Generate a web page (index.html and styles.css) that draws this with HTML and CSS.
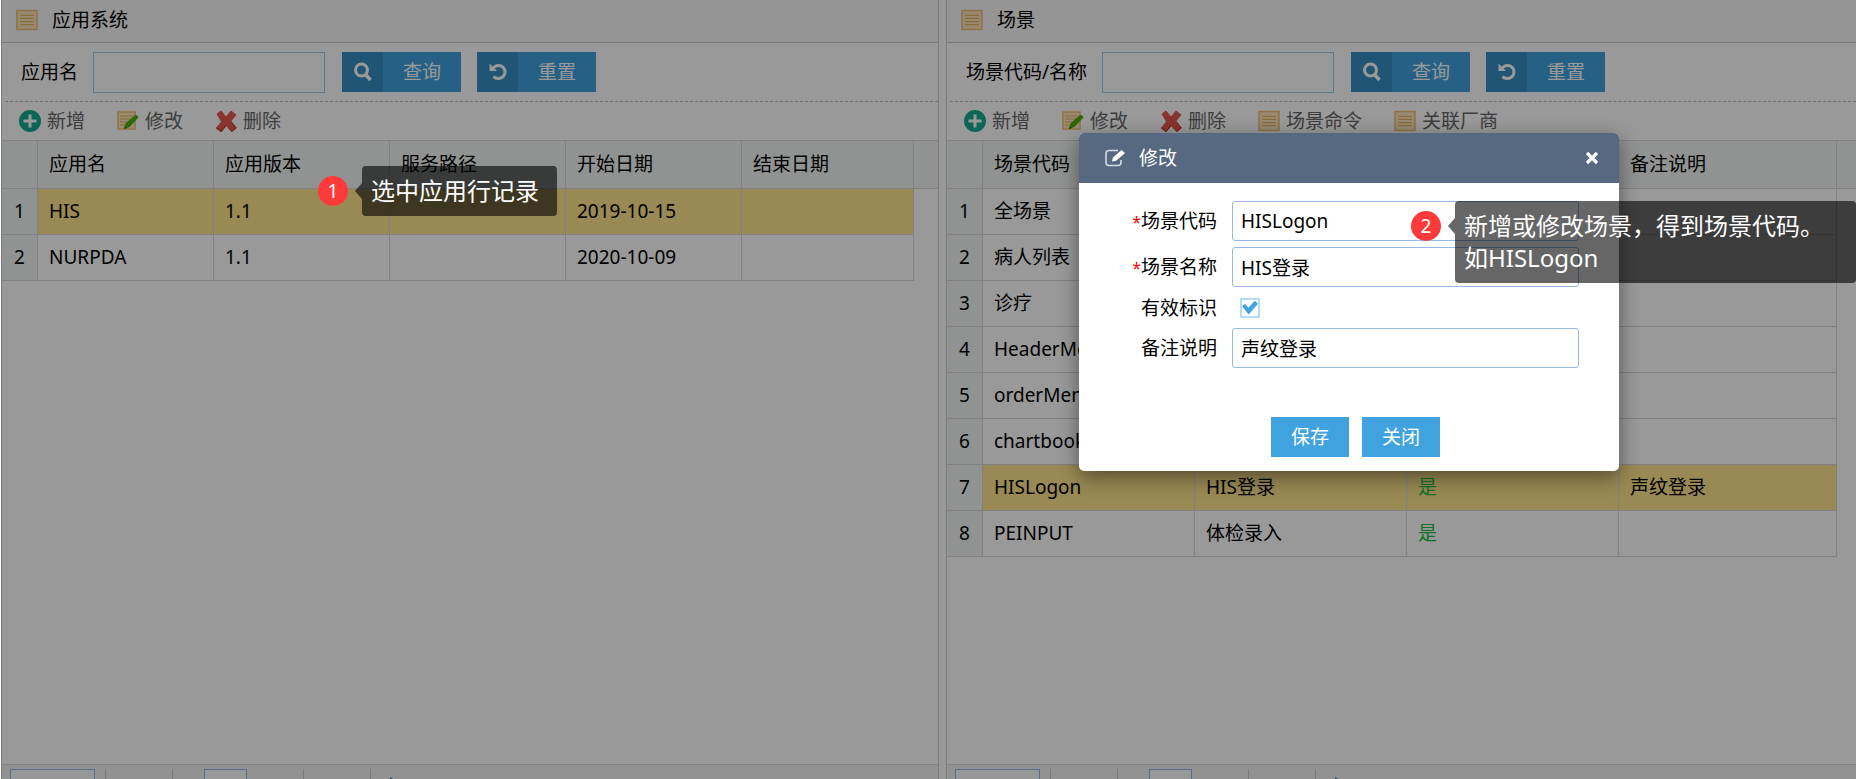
FILE: index.html
```html
<!DOCTYPE html>
<html lang="zh-CN">
<head>
    <meta charset="UTF-8">
    <meta name="viewport" content="width=device-width, initial-scale=1.0">
    <title>应用场景维护</title>
    <link rel="stylesheet" href="styles.css">
</head>
<body>

    <!-- 图标 -->
    <svg class="icon-defs" aria-hidden="true">
        <symbol id="i-list" viewBox="0 0 21 20">
            <rect x="1" y="1" width="19" height="18" fill="#fbe6c0" stroke="#eebf72" stroke-width="1.500"/>
            <path d="M4 5.500h13M4 8.500h13M4 11.500h13M4 14.500h13" stroke="#e8b45c" stroke-width="1.200"/>
        </symbol>
        <symbol id="i-add" viewBox="0 0 22 22">
            <circle cx="11" cy="11" r="11" fill="#17ab8c"/>
            <path d="M11 4.500v13M4.500 11h13" stroke="#fff" stroke-width="3"/>
        </symbol>
        <symbol id="i-edit" viewBox="0 0 22 20">
            <rect x="1" y="1" width="17" height="17" fill="#fbe6c0" stroke="#eebf72" stroke-width="1.500"/>
            <path d="M3 5h13M3 8h11M3 11h8M3 14h6" stroke="#e8b45c" stroke-width="1.200"/>
            <path d="M7 18l1.500-5.500L18 4q3-.5 3.500 2.500L12.500 16z" fill="#52ac0c"/>
            <path d="M7 18l.8-3 2.200 2z" fill="#3a7d08"/>
        </symbol>
        <symbol id="i-del" viewBox="0 0 22 22">
            <path d="M2 4L6 1l5 6 5-6 5 4-5.500 6.500L21 18l-4.500 3.500L11 15.500 6 21.500 1.500 18l5-6.500z" fill="#e4574f" stroke="#e4574f" stroke-linejoin="round"/>
            <path d="M11 15.500L6 21.500 1.500 18M16 11.500L21 18l-4.500 3.500" fill="none" stroke="#bd3730" stroke-width="1.200"/>
        </symbol>
        <symbol id="i-search" viewBox="0 0 20 20">
            <circle cx="8.500" cy="8" r="6" fill="none" stroke="#fff" stroke-width="3"/>
            <path d="M12.500 12.500l5 5.500" stroke="#fff" stroke-width="3.500"/>
        </symbol>
        <symbol id="i-reset" viewBox="0 0 20 20">
            <path d="M5 6.500Q7 3.500 10.500 3.500a6.500 6.500 0 0 1 0 13q-3.500 0-5-2" fill="none" stroke="#fff" stroke-width="3"/>
            <path d="M1.500 1.500v7.500h7.500z" fill="#fff"/>
        </symbol>
        <symbol id="i-write" viewBox="0 0 21 18">
            <path d="M13 1.500H4Q1 1.500 1 4.500v9Q1 16.500 4 16.500h9q3 0 3-3V11" fill="none" stroke="#d5dce4" stroke-width="1.600"/>
            <path d="M7 12.500l.8-3.800L16.500 1l3.500 3-8.800 7.800z" fill="#fff"/>
        </symbol>
        <symbol id="i-close" viewBox="0 0 14 14">
            <path d="M2 2l10 10M12 2L2 12" stroke="#fff" stroke-width="3.200"/>
        </symbol>
        <symbol id="i-first" viewBox="0 0 16 16">
            <path d="M2 0v16M14 0L5 8l9 8" fill="none" stroke="#40a2de" stroke-width="3"/>
        </symbol>
        <symbol id="i-prev" viewBox="0 0 16 16">
            <path d="M12 0L4 8l8 8" fill="none" stroke="#40a2de" stroke-width="3"/>
        </symbol>
        <symbol id="i-next" viewBox="0 0 16 16">
            <path d="M4 0l8 8-8 8" fill="none" stroke="#40a2de" stroke-width="3"/>
        </symbol>
        <symbol id="i-last" viewBox="0 0 16 16">
            <path d="M14 0v16M2 0l9 8-9 8" fill="none" stroke="#40a2de" stroke-width="3"/>
        </symbol>
        <symbol id="i-refresh" viewBox="0 0 18 18">
            <path d="M9 4a6 6 0 1 0 6 6" fill="none" stroke="#2a82bd" stroke-width="3"/>
            <path d="M8 0l6 4-6 4z" fill="#2a82bd"/>
        </symbol>
    </svg>

    <main class="layout">
        <!-- 应用系统 -->
        <section class="panel">
            <h2 class="panel-title"><svg class="icon"><use href="#i-list"/></svg>应用系统</h2>
            <div class="search">
                <label for="appName">应用名</label>
                <input type="text" id="appName">
                <button class="btn-icon"><span><svg class="icon-sm"><use href="#i-search"/></svg></span><b>查询</b></button>
                <button class="btn-icon"><span><svg class="icon-sm"><use href="#i-reset"/></svg></span><b>重置</b></button>
            </div>
            <div class="toolbar">
                <button><svg class="icon"><use href="#i-add"/></svg>新增</button>
                <button><svg class="icon"><use href="#i-edit"/></svg>修改</button>
                <button><svg class="icon"><use href="#i-del"/></svg>删除</button>
            </div>
            <table class="grid">
                <colgroup>
                    <col class="col-no"><col class="col-app"><col class="col-app"><col class="col-app"><col class="col-app"><col class="col-end"><col>
                </colgroup>
                <thead>
                    <tr><th></th><th>应用名</th><th>应用版本</th><th>服务路径</th><th>开始日期</th><th>结束日期</th><th class="rest"></th></tr>
                </thead>
                <tbody>
                    <tr class="selected"><td>1</td><td>HIS</td><td>1.1</td><td></td><td>2019-10-15</td><td></td></tr>
                    <tr><td>2</td><td>NURPDA</td><td>1.1</td><td></td><td>2020-10-09</td><td></td></tr>
                </tbody>
            </table>
            <div class="pager">
                <select aria-label="每页条数"><option>10</option></select>
                <div class="pager-group">
                    <button aria-label="首页"><svg><use href="#i-first"/></svg></button>
                    <button aria-label="上一页"><svg><use href="#i-prev"/></svg></button>
                </div>
                <div class="pager-page"><input type="text" aria-label="页码" value="1"></div>
                <div class="pager-group">
                    <button aria-label="下一页"><svg><use href="#i-next"/></svg></button>
                    <button aria-label="末页"><svg><use href="#i-last"/></svg></button>
                </div>
                <button aria-label="刷新" class="refresh"><svg><use href="#i-refresh"/></svg></button>
                <span class="pager-info">共2条记录</span>
            </div>
        </section>

        <!-- 场景 -->
        <section class="panel">
            <h2 class="panel-title"><svg class="icon"><use href="#i-list"/></svg>场景</h2>
            <div class="search">
                <label for="sceneKey">场景代码/名称</label>
                <input type="text" id="sceneKey">
                <button class="btn-icon"><span><svg class="icon-sm"><use href="#i-search"/></svg></span><b>查询</b></button>
                <button class="btn-icon"><span><svg class="icon-sm"><use href="#i-reset"/></svg></span><b>重置</b></button>
            </div>
            <div class="toolbar">
                <button><svg class="icon"><use href="#i-add"/></svg>新增</button>
                <button><svg class="icon"><use href="#i-edit"/></svg>修改</button>
                <button><svg class="icon"><use href="#i-del"/></svg>删除</button>
                <button><svg class="icon"><use href="#i-list"/></svg>场景命令</button>
                <button><svg class="icon"><use href="#i-list"/></svg>关联厂商</button>
            </div>
            <table class="grid">
                <colgroup>
                    <col class="col-no"><col class="col-scene"><col class="col-scene"><col class="col-scene"><col class="col-note"><col>
                </colgroup>
                <thead>
                    <tr><th></th><th>场景代码</th><th>场景名称</th><th>有效标识</th><th>备注说明</th><th class="rest"></th></tr>
                </thead>
                <tbody>
                    <tr><td>1</td><td>全场景</td><td></td><td></td><td></td></tr>
                    <tr><td>2</td><td>病人列表</td><td></td><td></td><td></td></tr>
                    <tr><td>3</td><td>诊疗</td><td></td><td></td><td></td></tr>
                    <tr><td>4</td><td>HeaderMenu</td><td></td><td></td><td></td></tr>
                    <tr><td>5</td><td>orderMenu</td><td></td><td></td><td></td></tr>
                    <tr><td>6</td><td>chartbook</td><td></td><td></td><td></td></tr>
                    <tr class="selected"><td>7</td><td>HISLogon</td><td>HIS登录</td><td class="yes">是</td><td>声纹登录</td></tr>
                    <tr><td>8</td><td>PEINPUT</td><td>体检录入</td><td class="yes">是</td><td></td></tr>
                </tbody>
            </table>
            <div class="pager">
                <select aria-label="每页条数"><option>10</option></select>
                <div class="pager-group">
                    <button aria-label="首页"><svg><use href="#i-first"/></svg></button>
                    <button aria-label="上一页"><svg><use href="#i-prev"/></svg></button>
                </div>
                <div class="pager-page"><input type="text" aria-label="页码" value="1"></div>
                <div class="pager-group">
                    <button aria-label="下一页"><svg><use href="#i-next"/></svg></button>
                    <button aria-label="末页"><svg><use href="#i-last"/></svg></button>
                </div>
                <button aria-label="刷新" class="refresh"><svg><use href="#i-refresh"/></svg></button>
                <span class="pager-info">共8条记录</span>
            </div>
        </section>
    </main>

    <div class="mask"></div>

    <!-- 修改弹窗 -->
    <form class="dialog">
        <header class="dialog-title">
            <svg><use href="#i-write"/></svg>
            <h3>修改</h3>
            <button type="button" aria-label="关闭窗口"><svg><use href="#i-close"/></svg></button>
        </header>
        <div class="fields">
            <label for="code"><i>*</i>场景代码</label>
            <input type="text" id="code" value="HISLogon">
            <label for="name"><i>*</i>场景名称</label>
            <input type="text" id="name" value="HIS登录">
            <label for="active">有效标识</label>
            <input type="checkbox" id="active" checked>
            <label for="note">备注说明</label>
            <input type="text" id="note" value="声纹登录">
        </div>
        <div class="actions">
            <button type="button">保存</button>
            <button type="button">关闭</button>
        </div>
    </form>

    <!-- 操作说明 -->
    <div class="step step-1">
        <span class="step-no">1</span>
        <p>选中应用行记录</p>
    </div>
    <div class="step step-2">
        <span class="step-no">2</span>
        <p>新增或修改场景，得到场景代码。<br>如HISLogon</p>
    </div>

</body>
</html>
```
FILE: styles.css
```css
* {
    box-sizing: border-box;
}
body {
    margin: 0;
    height: 100vh;
    overflow: hidden;
    position: relative;
    background: #fff;
    color: #000;
    font-family: "Noto Sans", "Noto Sans CJK SC", sans-serif;
    font-size: 19px;
    line-height: 26px;
}
button, input, select {
    font: inherit;
    color: inherit;
}
button {
    padding: 0;
    border: none;
    background: none;
    cursor: pointer;
}
.icon-defs {
    display: none;
}
.icon {
    width: 22px;
    height: 22px;
}
.icon-sm {
    width: 20px;
    height: 20px;
}

/* 面板 */
.layout {
    display: grid;
    grid-template-columns: 938fr 910fr;
    gap: 7px;
    height: calc(100vh + 30px);
    padding-left: 1px;
}
.panel {
    display: flex;
    flex-direction: column;
    min-width: 0;
    border-left: 1px solid #ccc;
    border-right: 1px solid #ccc;
}
.panel:last-child {
    border-right: none;
}
.panel-title {
    display: flex;
    align-items: center;
    gap: 14px;
    height: 43px;
    margin: 0;
    padding: 0 0 2px 14px;
    background: #f9f9f9;
    border-bottom: 1px solid #ccc;
    font-size: 19px;
    font-weight: normal;
}
.search {
    display: flex;
    align-items: center;
    height: 59px;
    margin-left: 3px;
    padding-left: 16px;
    border-bottom: 1px dashed #bbb;
}
.search input {
    width: 232px;
    height: 41px;
    margin: 0 1px 0 15px;
    padding: 0 8px;
    background: #fff;
    border: 1px solid #9bd0ee;
}
.btn-icon {
    display: flex;
    width: 119px;
    height: 40px;
    margin-left: 16px;
    background: #40a2de;
    color: #fff;
}
.btn-icon span {
    display: flex;
    align-items: center;
    justify-content: center;
    width: 41px;
    height: 40px;
    background: #378ec4;
}
.btn-icon b {
    flex: 1;
    font-weight: normal;
    line-height: 40px;
}
.toolbar {
    display: flex;
    align-items: center;
    gap: 32px;
    height: 38px;
    padding-left: 17px;
    color: #666;
}
.toolbar button {
    display: flex;
    align-items: center;
    gap: 6px;
}

/* 表格 */
.grid {
    width: 100%;
    table-layout: fixed;
    border-spacing: 0;
    border-top: 1px solid #d8d8d8;
}
.col-no {
    width: 36px;
}
.col-app {
    width: 176px;
}
.col-end {
    width: 172px;
}
.col-scene {
    width: 212px;
}
.col-note {
    width: 218px;
}
.grid th, .grid td {
    height: 46px;
    padding: 0 11px 2px;
    border-right: 1px solid #d8d8d8;
    border-bottom: 1px solid #d8d8d8;
    text-align: left;
    font-weight: normal;
    white-space: nowrap;
}
.grid th {
    height: 48px;
    background: #f1f5f3;
}
.grid .rest {
    border-right: none;
}
.grid td:first-child {
    padding: 0 0 2px;
    text-align: center;
    background: #f1f5f3;
}
.grid .selected td:not(:first-child) {
    background: #ffe48d;
}
.grid .yes {
    color: #21ba45;
}

/* 分页 */
.pager {
    display: flex;
    align-items: flex-start;
    height: 45px;
    margin-top: auto;
    padding: 4px 8px 0;
    background: #f4f4f4;
    border-top: 1px solid #ddd;
}
.pager select {
    width: 85px;
    height: 38px;
    border: 1px solid #95b8e7;
    background: #fafcfb;
}
.pager-group {
    display: flex;
    height: 38px;
    margin-left: 10px;
    padding: 0 7px;
    border-left: 1px solid #ccc;
    border-right: 1px solid #ccc;
}
.pager-group button {
    width: 26px;
}
.pager svg {
    width: 16px;
    height: 16px;
}
.pager-page {
    width: 120px;
    padding-left: 31px;
}
.pager-page input {
    width: 43px;
    height: 38px;
    padding: 0 8px;
    border: 1px solid #95b8e7;
    background: #fff;
}
.pager .refresh {
    width: 40px;
    height: 34px;
}
.pager-info {
    margin-left: auto;
    line-height: 40px;
}

.mask {
    position: absolute;
    inset: 0 0 0 1px;
    background: rgba(0, 0, 0, 0.4);
}

/* 弹窗 */
.dialog {
    position: absolute;
    top: 133px;
    right: 237px;
    width: 540px;
    padding-bottom: 14px;
    border-radius: 5px;
    background: #fff;
    box-shadow: 0 6px 20px rgba(0, 0, 0, 0.45);
}
.dialog-title {
    display: flex;
    align-items: center;
    gap: 13px;
    height: 50px;
    padding: 0 20px 0 26px;
    border-radius: 5px 5px 0 0;
    background: #566981;
    color: #fff;
}
.dialog-title svg {
    display: block;
    width: 21px;
    height: 18px;
}
.dialog-title h3 {
    flex: 1;
    margin: 0;
    font-size: 19px;
    font-weight: normal;
}
.dialog-title button svg {
    width: 14px;
    height: 14px;
}
.fields {
    display: grid;
    grid-template-columns: 138px 347px;
    grid-template-rows: 40px 40px 29px 40px;
    gap: 6px 15px;
    align-items: center;
    padding-top: 18px;
}
.fields label {
    text-align: right;
}
.fields i {
    color: #f00;
    font-size: 16px;
    font-style: normal;
}
.fields input[type="text"] {
    width: 100%;
    height: 40px;
    padding: 0 8px;
    border: 1px solid #95b8e7;
    border-radius: 3px;
}
.fields input[type="checkbox"] {
    appearance: none;
    width: 20px;
    height: 20px;
    margin: 0 8px;
    border: 2px solid #b4dcf4;
    background: #fff;
}
.fields input[type="checkbox"]:checked::before {
    content: "";
    display: block;
    width: 16px;
    height: 16px;
    background: #40a2de;
    clip-path: polygon(0 42%, 20% 28%, 40% 52%, 80% 8%, 100% 26%, 42% 94%);
}
.actions {
    display: flex;
    justify-content: center;
    gap: 13px;
    margin-top: 49px;
    padding-left: 13px;
}
.actions button {
    width: 78px;
    height: 40px;
    background: #40a2de;
    color: #fff;
}

/* 步骤提示 */
.step {
    position: absolute;
    display: flex;
    align-items: flex-start;
    gap: 14px;
    color: #fff;
}
.step-1 {
    top: 166px;
    left: 318px;
}
.step-2 {
    top: 201px;
    right: 0;
}
.step-no {
    width: 30px;
    height: 30px;
    margin-top: 10px;
    border-radius: 50%;
    background: #fe3a3a;
    line-height: 30px;
    text-align: center;
}
.step p {
    position: relative;
    margin: 0;
    padding: 9px 18px 9px 9px;
    border-radius: 4px;
    background: rgba(0, 0, 0, 0.6);
    font-size: 24px;
    line-height: 32px;
}
.step-2 p {
    width: 401px;
}
.step p::before {
    content: "";
    position: absolute;
    top: 17px;
    right: 100%;
    border: 8px solid transparent;
    border-left: none;
    border-right: 7px solid rgba(0, 0, 0, 0.6);
}
```
